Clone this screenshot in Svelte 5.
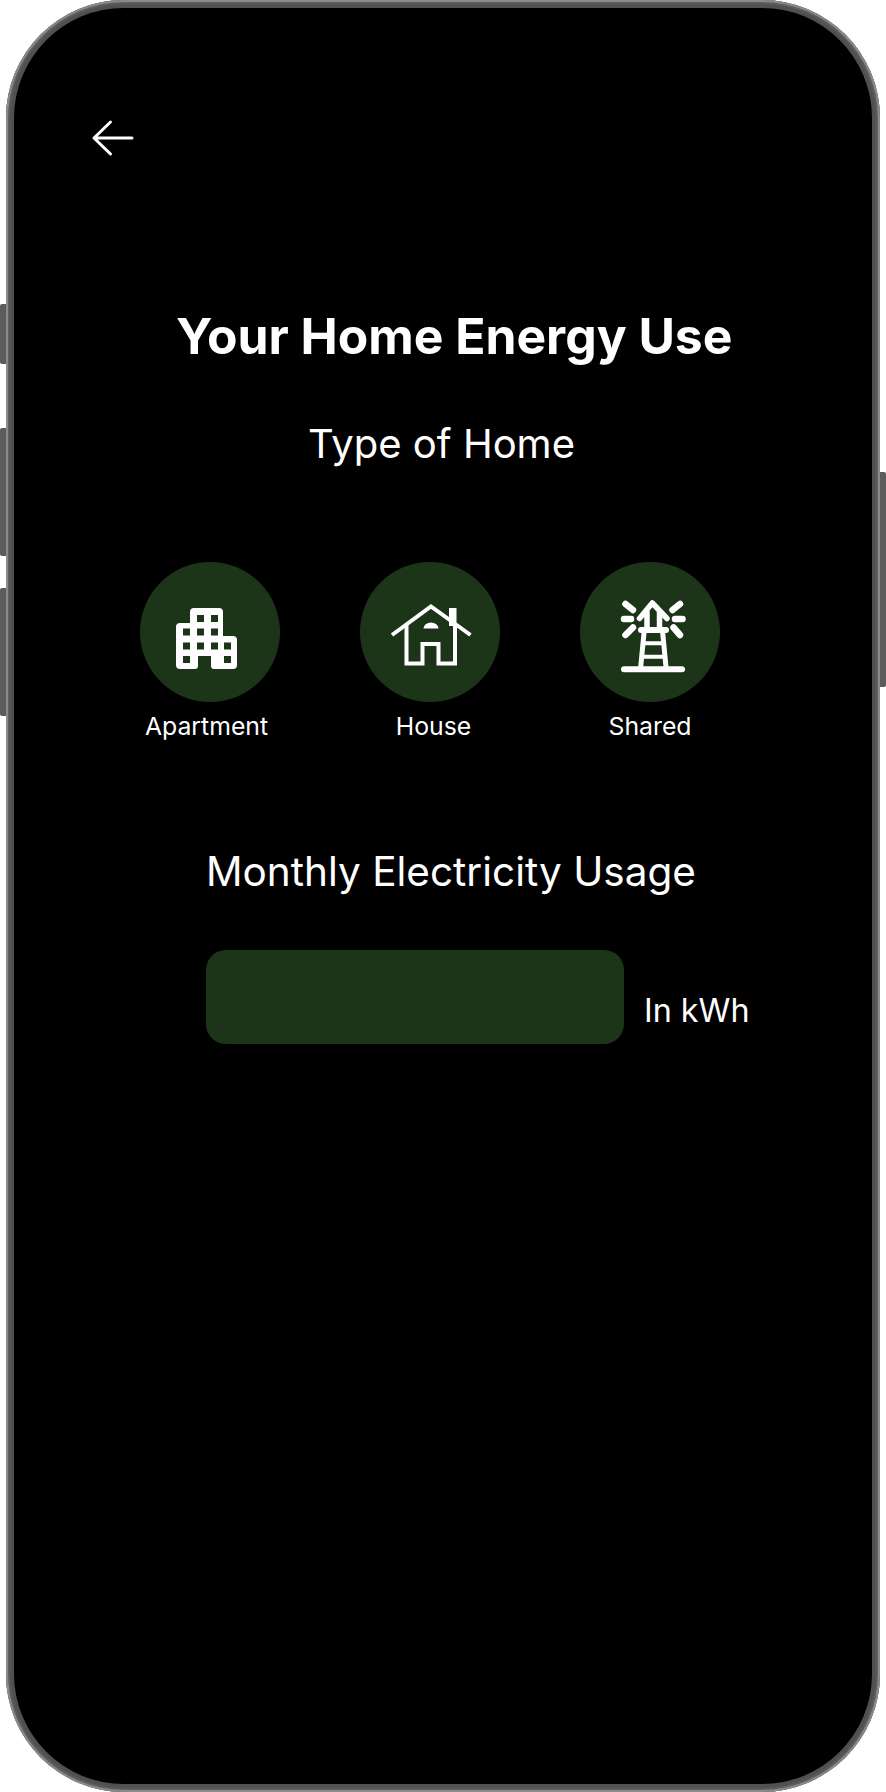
<script lang="ts">
	const homeTypes = [
		{ id: 'apartment', label: 'Apartment' },
		{ id: 'house', label: 'House' },
		{ id: 'shared', label: 'Shared' }
	];
</script>

<div class="device">
	<span class="side-btn left b1"></span>
	<span class="side-btn left b2"></span>
	<span class="side-btn left b3"></span>
	<span class="side-btn right b4"></span>

	<div class="phone">
		<main class="screen">
			<button class="back" aria-label="Back">
				<svg width="44" height="38" viewBox="0 0 44 38" fill="none" stroke="#fff" stroke-width="3" stroke-linecap="round" stroke-linejoin="round">
					<path d="M3 19H41M19.500 3 3 19l16.500 16" />
				</svg>
			</button>

			<h1>Your Home Energy Use</h1>
			<h2 class="type-title">Type of Home</h2>

			<div class="types">
				{#each homeTypes as t}
					<div class="type {t.id}">
						<div class="circle">
							{#if t.id === 'apartment'}
								<svg viewBox="0 0 140 140" width="140" height="140">
									<path fill="#fff" d="M54 46h25a4 4 0 0 1 4 4v24h10a4 4 0 0 1 4 4v25a4 4 0 0 1-4 4H74a3 3 0 0 1-3-3V94H58v10a3 3 0 0 1-3 3H40a4 4 0 0 1-4-4V65a4 4 0 0 1 4-4h10V50a4 4 0 0 1 4-4z" />
									<g fill="#1c3518">
										<rect x="57" y="53" width="7" height="7" /><rect x="71" y="53" width="7" height="7" />
										<rect x="43" y="66.500" width="7" height="7" /><rect x="57" y="66.500" width="7" height="7" /><rect x="71" y="66.500" width="7" height="7" />
										<rect x="43" y="80.500" width="7" height="7" /><rect x="57" y="80.500" width="7" height="7" /><rect x="71" y="80.500" width="7" height="7" /><rect x="84" y="80.500" width="7" height="7" />
										<rect x="43" y="94" width="7" height="7" /><rect x="84" y="94" width="7" height="7" />
									</g>
								</svg>
							{:else if t.id === 'house'}
								<svg viewBox="0 0 140 140" width="140" height="140">
									<g fill="none" stroke="#fff" stroke-width="4">
										<path d="M32 73 71 44.500 110.500 73" />
										<path d="M46.500 62v39.500h16V82h16v19.500H95V62" />
									</g>
									<rect x="89" y="46" width="7.500" height="18" fill="#fff" />
									<path fill="#fff" d="M63.500 66.500a7.500 6 0 0 1 15 0z" />
								</svg>
							{:else}
								<svg viewBox="0 0 140 140" width="140" height="140">
									<g fill="none" stroke="#fff" stroke-linecap="round" stroke-linejoin="round">
										<path stroke-width="6" d="M44 107.300h58" />
										<path stroke-width="6" d="M61 68h25" />
										<path stroke-width="5" d="M64 71 60.700 105M82.700 71 86 105" />
										<path stroke-width="4" d="M63 81.300h21M62 94.700h23" />
										<path stroke-width="5.500" d="M59.500 56.500 72.300 41 87 56.500M67 50v16M79.500 50v16" />
										<path stroke-width="6.500" d="M45.500 42l7.500 6M44 57h7M45.500 73l7.500-7.500M100 42l-7.500 6M102.500 57h-7.500M100 73l-6.500-7.500" />
									</g>
								</svg>
							{/if}
						</div>
						<span class="label">{t.label}</span>
					</div>
				{/each}
			</div>

			<h2 class="usage-title">Monthly Electricity Usage</h2>

			<div class="usage">
				<div class="input-bar"></div>
				<span class="unit">In kWh</span>
			</div>
		</main>
	</div>
</div>

<style>
	:global(body) {
		background: #fff;
		font-family: Inter, 'Liberation Sans', sans-serif;
	}

	.device {
		position: relative;
		width: 886px;
		height: 1792px;
		padding: 0 6px;
		box-sizing: border-box;
	}

	.side-btn {
		position: absolute;
		width: 6px;
		background: #5c5c5c;
	}

	.side-btn.left {
		left: 0;
		border-radius: 2px 0 0 2px;
	}

	.side-btn.right {
		right: 0;
		border-radius: 0 2px 2px 0;
	}

	.b1 {
		top: 304px;
		height: 60px;
	}

	.b2 {
		top: 428px;
		height: 128px;
	}

	.b3 {
		top: 588px;
		height: 128px;
	}

	.b4 {
		top: 472px;
		height: 215px;
	}

	.phone {
		height: 100%;
		box-sizing: border-box;
		padding: 8px;
		border-radius: 118px;
		background: #505050;
		box-shadow:
			inset 0 0 0 2px #8a8a8a,
			inset 0 0 3px 3px #6a6a6a;
	}

	.screen {
		height: 100%;
		background: #000;
		border-radius: 110px;
		color: #fff;
		overflow: hidden;
		display: flow-root;
	}

	.back {
		display: block;
		margin: 111px 0 0 77px;
		padding: 0;
		background: none;
		border: none;
	}

	h1 {
		margin: 147px 0 0 162px;
		font-size: 49.800px;
		font-weight: 700;
		line-height: 58px;
	}

	h2 {
		margin: 0;
		font-size: 40px;
		font-weight: 400;
		line-height: 48px;
	}

	.type-title {
		margin: 55px 0 0 294px;
	}

	.types {
		display: flex;
		gap: 80px;
		margin: 94px 0 0 126px;
	}

	.type {
		width: 140px;
		display: flex;
		flex-direction: column;
		align-items: center;
		gap: 9px;
	}

	.circle {
		width: 140px;
		height: 140px;
		border-radius: 50%;
		background: #1c3518;
	}

	.circle svg {
		display: block;
	}

	.label {
		font-size: 24.800px;
		line-height: 30px;
		white-space: nowrap;
	}

	.apartment .label {
		margin-right: 7px;
	}

	.house .label {
		margin-left: 7px;
	}

	.usage-title {
		margin: 107px 0 0 192px;
		font-size: 40.500px;
	}

	.usage {
		display: flex;
		align-items: flex-end;
		gap: 20px;
		margin: 54px 0 0 192px;
	}

	.input-bar {
		width: 418px;
		height: 94px;
		border-radius: 20px;
		background: #1c3518;
	}

	.unit {
		font-size: 32.300px;
		line-height: 40px;
		margin-bottom: 13px;
	}
</style>
